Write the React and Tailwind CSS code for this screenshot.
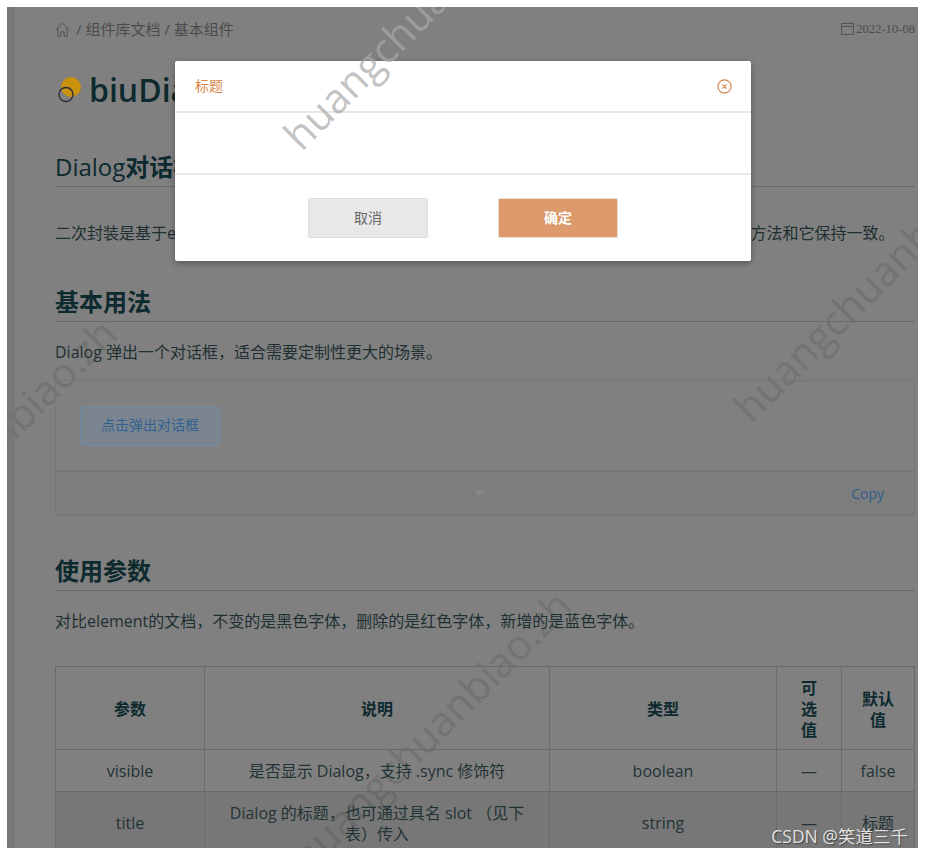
const FONT = { fontFamily: '"Open Sans","Noto Sans CJK SC",sans-serif' };

function Watermark({ className }) {
  return (
    <div className={`absolute origin-bottom-left -rotate-45 whitespace-nowrap text-[41px] leading-none font-medium pointer-events-none ${className}`}>
      huangchuanbiao.zh
    </div>
  );
}

function SectionTitle({ children, className = "" }) {
  return (
    <h2 className={`border-b border-[#6a6a6a] text-[24px] leading-[30px] font-bold text-[#0d2a2e] ${className}`}>
      {children}
    </h2>
  );
}

const Th = ({ children, pad = "px-3" }) => (
  <th className={`border border-[#666b6b] ${pad} pt-[3px] text-center text-[16px] leading-[21px] font-bold text-[#0d2a2e]`}>
    {children}
  </th>
);
const Td = ({ children, pad = "px-6" }) => (
  <td className={`border border-[#666b6b] ${pad} text-center text-[16px] leading-[21px] text-[#223335]`}>
    {children}
  </td>
);

export default function App() {
  return (
    <div className="w-[925px] h-[855px] bg-white p-[7px]" style={FONT}>
      <div className="relative w-[911px] h-[841px] overflow-hidden bg-[#808080] flex">
        <div className="w-[8px] shrink-0 bg-[#777777]" />

        <Watermark className="left-[-150px] top-[558px] text-[#737373]" />
        <Watermark className="left-[748px] top-[380px] text-[#737373]" />
        <Watermark className="left-[305px] top-[830px] text-[#737373]" />

        <main className="relative flex-1 pl-[40px] pr-[3px] min-w-0">
          <div className="h-[20px] mt-[12px] flex items-center justify-between">
            <div className="flex items-center gap-[6px] text-[15px] text-[#4b4b4b]">
              <svg width="15" height="15" viewBox="0 0 16 16" fill="none" stroke="#4f4f4f" strokeWidth="1" strokeLinejoin="round">
                <path d="M1 8 8 1.2 15 8" />
                <path d="M3 6.5V15H6.3V10.5H9.7V15H13V6.5" />
              </svg>
              <span>/ 组件库文档 / 基本组件</span>
            </div>
            <div className="flex items-center gap-[2px] text-[12.6px] text-[#4b4b4b]" style={{ fontFamily: '"Liberation Serif",serif' }}>
              <svg width="13" height="13" viewBox="0 0 13 13" fill="none" stroke="#555555" strokeWidth="1">
                <rect x="0.5" y="1.5" width="12" height="11" />
                <path d="M0.5 4.5H12.5M3.5 0V2M9.5 0V2" />
              </svg>
              <span>2022-10-08</span>
            </div>
          </div>

          <div className="mt-[24px] h-[54px] flex items-center gap-[8px]">
            <svg width="26" height="28" viewBox="0 0 26 28" className="shrink-0">
              <circle cx="16" cy="11" r="10" fill="#c8920f" />
              <circle cx="11" cy="18.5" r="7" fill="none" stroke="#2c2d3c" strokeWidth="1.4" />
            </svg>
            <h1 className="text-[32px] leading-[40px] font-semibold text-[#0d2a2e]">biuDialog</h1>
          </div>

          <SectionTitle className="mt-[28px] h-[42px] pt-[7px]">
            <span className="font-medium">Dialog</span>对话框
          </SectionTitle>
          <p className="mt-[35px] whitespace-nowrap text-[16px] leading-[22px] text-[#1f3032]">
            二次封装是基于element-ui 的 Dialog对话框组件开发的，相关的属性、事件、插槽及其他的用法和方法和它保持一致。
          </p>

          <SectionTitle className="mt-[33px] h-[45px] pt-[10px]">基本用法</SectionTitle>
          <p className="mt-[19px] text-[16px] leading-[22px] text-[#1f3032]">
            Dialog 弹出一个对话框，适合需要定制性更大的场景。
          </p>

          <section className="mt-[17px] h-[136px] border border-[#767676] rounded-[2px] flex flex-col">
            <div className="h-[91px] pl-[24px] pt-[25px] border-b-2 border-[#73777d]">
              <button className="w-[140px] h-[40px] pb-[4px] rounded-[4px] border border-[#728ba6] bg-[#7b8590] text-[14px] text-[#33618f]">
                点击弹出对话框
              </button>
            </div>
            <div className="flex-1 bg-[#7d7d7d] flex items-center">
              <span className="ml-[417px] mb-[2px] w-0 h-0 border-x-[6px] border-t-[6px] border-x-transparent border-t-[#878787]" />
              <span className="ml-auto mr-[30px] text-[14px] text-[#2f5d8c]">Copy</span>
            </div>
          </section>

          <SectionTitle className="mt-[40px] h-[35px]">使用参数</SectionTitle>
          <p className="mt-[19px] text-[16px] leading-[22px] text-[#1f3032]">
            对比element的文档，不变的是黑色字体，删除的是红色字体，新增的是蓝色字体。
          </p>

          <table className="mt-[34px] w-[859px] table-fixed border-collapse">
            <colgroup>
              <col className="w-[149px]" />
              <col className="w-[345px]" />
              <col className="w-[227px]" />
              <col className="w-[65px]" />
              <col className="w-[73px]" />
            </colgroup>
            <thead>
              <tr className="h-[83px]">
                <Th>参数</Th>
                <Th>说明</Th>
                <Th>类型</Th>
                <Th pad="px-5">可选值</Th>
                <Th pad="px-5">默认值</Th>
              </tr>
            </thead>
            <tbody>
              <tr className="h-[42px]">
                <Td pad="px-6 pt-[2px]">visible</Td>
                <Td pad="px-2 pt-[2px]">是否显示 Dialog，支持 .sync 修饰符</Td>
                <Td pad="px-6 pt-[2px]">boolean</Td>
                <Td pad="px-2 pt-[2px]">—</Td>
                <Td pad="px-2 pt-[2px]">false</Td>
              </tr>
              <tr className="h-[64px] bg-black/[0.07]">
                <Td>title</Td>
                <Td>Dialog 的标题，也可通过具名 slot （见下表）传入</Td>
                <Td>string</Td>
                <Td pad="px-2">—</Td>
                <Td pad="px-2">标题</Td>
              </tr>
            </tbody>
          </table>
        </main>

        <div role="dialog" className="absolute left-[168px] top-[54px] w-[576px] h-[200px] bg-white rounded-[2px] shadow-[0_2px_6px_rgba(0,0,0,0.35)] flex flex-col">
          <header className="h-[52px] border-b-2 border-[#e8e8e8] pl-[20px] pr-[19px] pb-[2px] flex items-center justify-between">
            <span className="text-[14px] text-[#d9864b]">标题</span>
            <svg width="15" height="15" viewBox="0 0 15 15" fill="none" stroke="#d9864b" strokeWidth="1.2" className="mt-[2px]">
              <circle cx="7.5" cy="7.5" r="6.6" />
              <path d="M5.4 5.4 9.6 9.6M9.6 5.4 5.4 9.6" />
            </svg>
          </header>
          <div className="h-[62px] border-b-2 border-[#e8e8e8]" />
          <footer className="flex-1 flex items-center justify-center gap-[70px]">
            <button className="w-[120px] h-[40px] pb-[2px] rounded-[2px] border border-[#dddddd] bg-[#e8e8e8] text-[14px] text-[#666666]">取消</button>
            <button className="w-[120px] h-[40px] pb-[1px] rounded-[2px] border border-[#eadacd] bg-[#dd9a6c] text-[14px] font-bold text-white">确定</button>
          </footer>
        </div>

        <Watermark className="left-[298px] top-[108px] text-[#a8a8a8]/70" />

        <div className="absolute right-[10px] bottom-[1px] text-[17.5px] leading-[22px] text-[#e2e2e2] [text-shadow:1px_1px_1px_rgba(0,0,0,0.45)]">
          CSDN @笑道三千
        </div>
      </div>
    </div>
  );
}
